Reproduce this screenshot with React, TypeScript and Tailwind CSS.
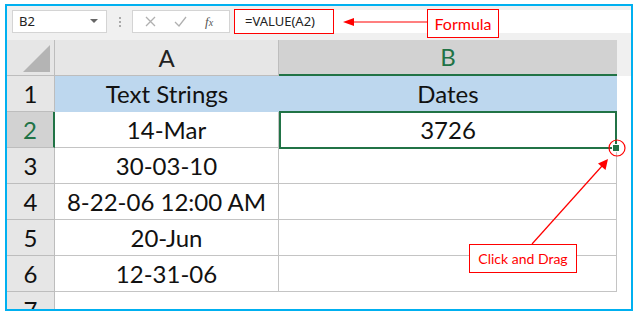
import React from 'react';

const rows: { n: number; a: string; b: string }[] = [
  { n: 1, a: 'Text Strings', b: 'Dates' },
  { n: 2, a: '14-Mar', b: '3726' },
  { n: 3, a: '30-03-10', b: '' },
  { n: 4, a: '8-22-06 12:00 AM', b: '' },
  { n: 5, a: '20-Jun', b: '' },
  { n: 6, a: '12-31-06', b: '' },
];

const cellFont = { fontFamily: 'Lato, "Liberation Sans", sans-serif' };

const FormulaBar: React.FC = () => (
  <div className="flex h-[34px] items-start bg-[#f0f0f0] pt-[4px]" style={{ fontFamily: '"Noto Sans", "Open Sans", sans-serif' }}>
    <div className="ml-[5px] flex h-[23px] w-[95px] items-center justify-between border border-[#d4d4d4] bg-white pl-[6px] pr-[8px] text-[13px] text-[#222]">
      <span>B2</span>
      <svg width="8" height="5" viewBox="0 0 8 5">
        <path d="M0 0 L8 0 L4 4 Z" fill="#666" />
      </svg>
    </div>
    <div className="flex h-[23px] w-[25px] flex-col items-center justify-center gap-[2px]">
      <span className="h-[2px] w-[2px] bg-[#aaa]" />
      <span className="h-[2px] w-[2px] bg-[#aaa]" />
      <span className="h-[2px] w-[2px] bg-[#aaa]" />
    </div>
    <div className="flex h-[23px] w-[98px] items-center border border-[#d4d4d4] bg-white">
      <svg className="ml-[12px]" width="11" height="11" viewBox="0 0 11 11">
        <path d="M1 1 L10 10 M10 1 L1 10" stroke="#b0b0b0" strokeWidth="1.3" />
      </svg>
      <svg className="ml-[18px]" width="13" height="11" viewBox="0 0 13 11">
        <path d="M1 6 L5 10 L12 1" stroke="#b0b0b0" strokeWidth="1.3" fill="none" />
      </svg>
      <span className="ml-[18px] text-[13px] italic text-[#555]" style={{ fontFamily: '"Liberation Serif", serif' }}>
        f<span className="text-[10px]">x</span>
      </span>
    </div>
    <div className="ml-[4px] flex h-[23px] flex-1 items-center bg-white">
      <div className="flex h-[25px] w-[100px] items-center border-[1.5px] border-[#ff0000] pl-[10px] text-[13px] text-[#222]">
        =VALUE(A2)
      </div>
    </div>
  </div>
);

const App: React.FC = () => {
  return (
    <div className="relative h-[319px] w-[638px] overflow-hidden bg-white">
      <div className="ml-[5px] mt-[4px] h-[307px] w-[628px] border-2 border-[#00b0f0] bg-white">
        <FormulaBar />
        {/* column headers */}
        <div className="flex h-[36px] text-[24px] text-[#222]" style={cellFont}>
          <div className="flex w-[48px] items-end justify-end border-r border-b border-[#bdbdbd] bg-[#e6e6e6] pb-[3px] pr-[3px]">
            <svg width="28" height="27" viewBox="0 0 28 27">
              <path d="M27 0 L27 27 L0 27 Z" fill="#b4b4b4" />
            </svg>
          </div>
          <div className="flex w-[224px] items-center justify-center border-r border-b border-[#bdbdbd] bg-[#e6e6e6]">A</div>
          <div className="flex w-[338px] items-center justify-center border-b-2 border-[#217346] bg-[#d2d2d2] text-[#217346]">B</div>
          <div className="flex-1 bg-[#f0f0f0]" />
        </div>
        {rows.map((r) => {
          const sel = r.n === 2;
          const blue = r.n === 1;
          return (
            <div key={r.n} className="flex h-[36px] text-[24px] text-[#111]" style={cellFont}>
              <div
                className={
                  sel
                    ? 'flex w-[48px] items-center justify-center border-r-2 border-b border-r-[#217346] border-b-[#bdbdbd] bg-[#d2d2d2] text-[#217346]'
                    : 'flex w-[48px] items-center justify-center border-r border-b border-[#bdbdbd] bg-[#e6e6e6]'
                }
              >
                {r.n}
              </div>
              <div
                className={
                  blue
                    ? 'flex w-[224px] items-center justify-center bg-[#bdd7ee]'
                    : 'flex w-[224px] items-center justify-center border-r border-b border-[#c4c4c4]'
                }
              >
                {r.a}
              </div>
              <div
                className={
                  blue
                    ? 'flex w-[338px] items-center justify-center bg-[#bdd7ee]'
                    : sel
                    ? 'relative -mt-[1px] flex h-[38px] w-[338px] items-center justify-center border-2 border-[#217346]'
                    : 'flex w-[338px] items-center justify-center border-r border-b border-[#c4c4c4]'
                }
              >
                {r.b}
                {sel && (
                  <span className="absolute -bottom-[5px] -right-[5px] h-[8px] w-[8px] border border-white bg-[#217346]" />
                )}
              </div>
              <div className="flex-1 bg-white" />
            </div>
          );
        })}
        <div className="flex h-[17px] overflow-hidden text-[24px] text-[#111]" style={cellFont}>
          <div className="flex w-[48px] justify-center bg-[#e6e6e6] border-r border-[#bdbdbd] leading-[36px]">7</div>
          <div className="flex-1 bg-white" />
        </div>
      </div>

      {/* annotations */}
      <svg className="pointer-events-none absolute left-0 top-0" width="638" height="319">
        <line x1="427" y1="22" x2="352" y2="22" stroke="#ff0000" strokeWidth="1.2" />
        <path d="M343 22 L354 18 L354 26 Z" fill="#ff0000" />
        <circle cx="617" cy="148" r="8" fill="none" stroke="#ff0000" strokeWidth="1.2" />
        <line x1="532" y1="244" x2="602" y2="166" stroke="#ff0000" strokeWidth="1.2" />
        <path d="M608 159 L605.5 170 L598 163.5 Z" fill="#ff0000" />
      </svg>
      <div
        className="absolute left-[427px] top-[9px] flex h-[29px] w-[72px] items-center justify-center border border-[#ff0000] bg-white text-[16px] text-[#ff0000]"
        style={cellFont}
      >
        Formula
      </div>
      <div
        className="absolute left-[469px] top-[244px] flex h-[29px] w-[108px] items-center justify-center border border-[#ff0000] bg-white text-[14px] text-[#ff0000]"
        style={cellFont}
      >
        Click and Drag
      </div>
    </div>
  );
};

export default App;
